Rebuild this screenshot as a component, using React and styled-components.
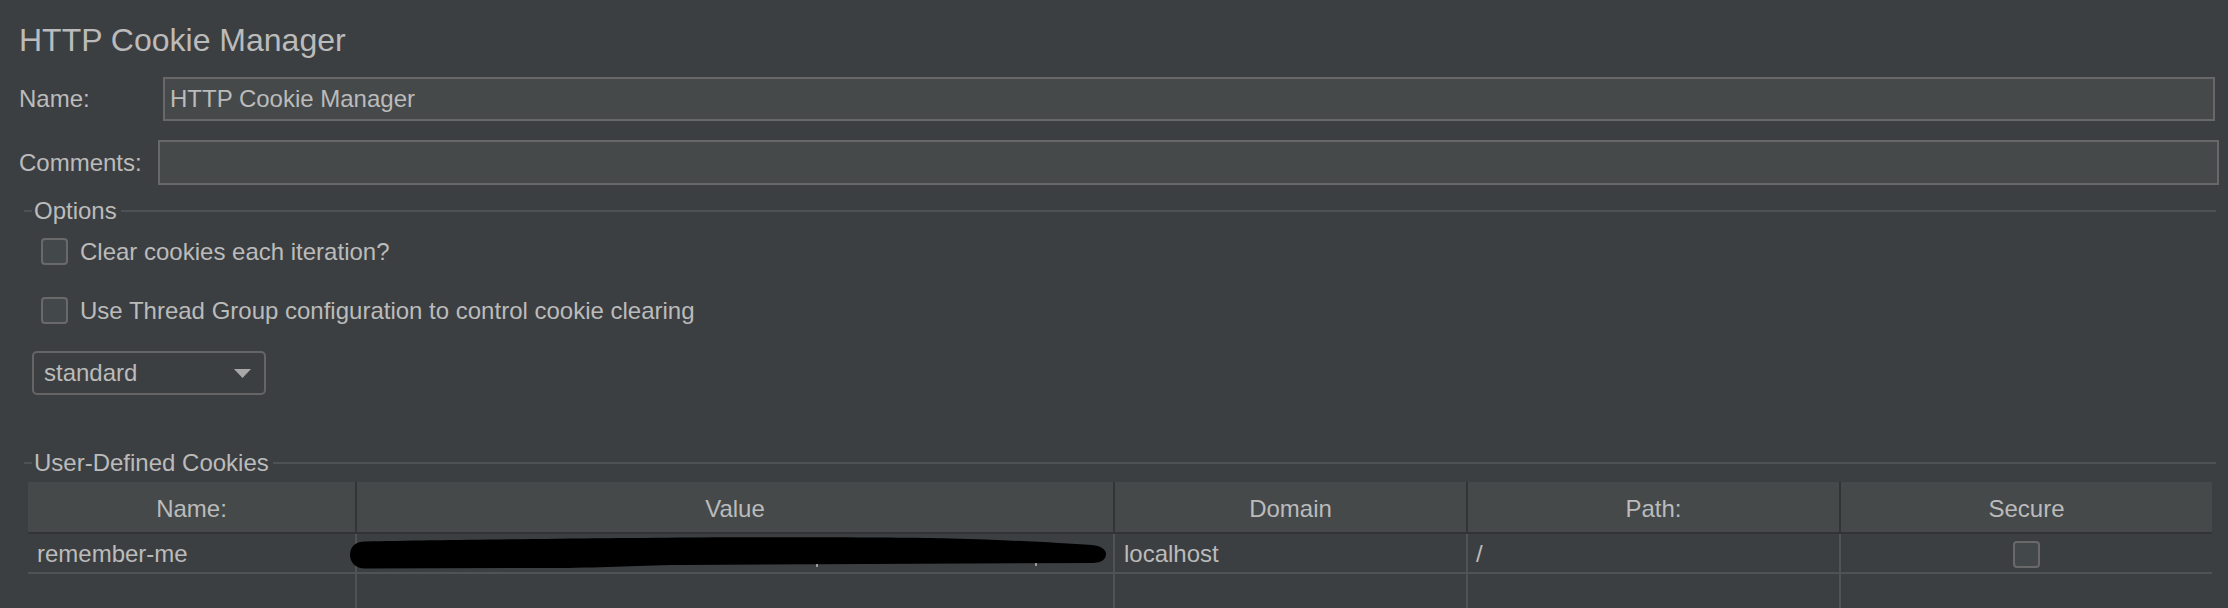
import React from 'react'
import styled, { createGlobalStyle } from 'styled-components'

const GlobalStyle = createGlobalStyle`
  html, body {
    margin: 0;
    padding: 0;
    background: #3c3f41;
  }
  body {
    font-family: "Liberation Sans", Arial, sans-serif;
    color: #bbbbbb;
    overflow: hidden;
  }
`

const Page = styled.div`
  width: 2228px;
  height: 608px;
  box-sizing: border-box;
  padding: 22px 9px 0 19px;
  background: #3c3f41;
  overflow: hidden;
`

const Title = styled.div`
  font-size: 32px;
  line-height: 36px;
  height: 36px;
  color: #bbbbbb;
`

const FieldRow = styled.div`
  display: flex;
  align-items: center;
  height: ${p => p.$h}px;
  margin-top: 19px;
  margin-right: ${p => p.$mr || 0}px;
`

const Label = styled.div`
  width: ${p => p.$w}px;
  flex-shrink: 0;
  font-size: 24px;
  color: #bbbbbb;
`

const TextField = styled.input`
  flex: 1;
  height: 100%;
  box-sizing: border-box;
  border: 2px solid #686868;
  background: #45494a;
  color: #bbbbbb;
  font-family: "Liberation Sans", Arial, sans-serif;
  font-size: 24px;
  padding: 0 5px;
  outline: none;
  margin: 0;
`

const Legend = styled.div`
  display: flex;
  align-items: center;
  height: 28px;
  margin: ${p => p.$mt}px 3px 0 5px;
`

const LegendLine = styled.div`
  height: 2px;
  background: #4f5254;
  width: ${p => (p.$grow ? 'auto' : '8px')};
  flex: ${p => (p.$grow ? 1 : 'none')};
`

const LegendText = styled.div`
  font-size: 24px;
  color: #bbbbbb;
  padding: 0 4px 0 2px;
  line-height: 28px;
`

const Options = styled.div`
  padding-left: 13px;
`

const CheckRow = styled.label`
  display: flex;
  align-items: center;
  gap: 12px;
  height: 27px;
  margin-top: ${p => p.$mt}px;
  padding-left: 9px;
  font-size: 24px;
  color: #bbbbbb;
`

const CheckBox = styled.span`
  display: inline-block;
  width: 27px;
  height: 27px;
  box-sizing: border-box;
  border: 2px solid #696969;
  border-radius: 4px;
  background: #43494a;
  flex-shrink: 0;
`

const Select = styled.div`
  display: flex;
  align-items: center;
  justify-content: space-between;
  width: 234px;
  height: 44px;
  box-sizing: border-box;
  margin-top: 27px;
  padding: 0 13px 0 10px;
  border: 2px solid #656565;
  border-radius: 5px;
  font-size: 24px;
  color: #bbbbbb;
`

const Table = styled.div`
  margin: 5px 7px 0 9px;
  display: grid;
  grid-template-columns: 327px 758px 353px 373px 373px;
`

const HeadCell = styled.div`
  height: 52px;
  box-sizing: border-box;
  background: #45494a;
  border-bottom: 2px solid #323435;
  border-left: ${p => (p.$first ? 'none' : '2px solid #323435')};
  display: flex;
  align-items: center;
  justify-content: center;
  padding-top: 4px;
  font-size: 24px;
  color: #bbbbbb;
`

const Cell = styled.div`
  position: relative;
  height: 40px;
  box-sizing: border-box;
  border-bottom: 2px solid #505354;
  border-left: ${p => (p.$first ? 'none' : '2px solid #505354')};
  display: flex;
  align-items: center;
  justify-content: ${p => (p.$center ? 'center' : 'flex-start')};
  padding: 2px 0 0 ${p => (p.$center ? 0 : p.$pl || 9)}px;
  font-size: 24px;
  color: #bbbbbb;
`

const Redaction = styled.svg`
  position: absolute;
  left: -7px;
  top: 3px;
`

const columns = ['Name:', 'Value', 'Domain', 'Path:', 'Secure']

function Arrow() {
  return (
    <svg width="17" height="9" viewBox="0 0 17 9">
      <polygon points="0,0 17,0 8.5,9" fill="#a8a8a8" />
    </svg>
  )
}

function Scribble() {
  return (
    <Redaction width="758" height="34" viewBox="0 0 758 34">
      <path
        d="M15,4.5 C100,3 250,1 350,0.5 C480,0 560,0.5 600,1.5 C660,3 710,6 742,8 C752,9 756,13 756,17 C756,22 752,26 742,26 L330,28 C280,28.5 250,31 200,31 L15,31.5 C5,31.5 0,25 0,18 C0,10 5,4.5 15,4.5 Z"
        fill="#000"
      />
      <rect x="466" y="27" width="2" height="3" fill="#9a9a9a" />
      <rect x="685" y="26" width="2" height="3" fill="#9a9a9a" />
    </Redaction>
  )
}

export default function App() {
  return (
    <>
      <GlobalStyle />
      <Page>
        <Title>HTTP Cookie Manager</Title>
        <FieldRow $h={44} $mr={4}>
          <Label $w={144}>Name:</Label>
          <TextField defaultValue="HTTP Cookie Manager" readOnly />
        </FieldRow>
        <FieldRow $h={45}>
          <Label $w={139}>Comments:</Label>
          <TextField defaultValue="" readOnly />
        </FieldRow>

        <Legend $mt={12}>
          <LegendLine />
          <LegendText>Options</LegendText>
          <LegendLine $grow />
        </Legend>
        <Options>
          <CheckRow $mt={13}>
            <CheckBox />
            Clear cookies each iteration?
          </CheckRow>
          <CheckRow $mt={32}>
            <CheckBox />
            Use Thread Group configuration to control cookie clearing
          </CheckRow>
          <Select>
            standard
            <Arrow />
          </Select>
        </Options>

        <Legend $mt={54}>
          <LegendLine />
          <LegendText>User-Defined Cookies</LegendText>
          <LegendLine $grow />
        </Legend>
        <Table>
          {columns.map((c, i) => (
            <HeadCell key={c} $first={i === 0}>{c}</HeadCell>
          ))}
          <Cell $first>remember-me</Cell>
          <Cell>
            <Scribble />
          </Cell>
          <Cell>localhost</Cell>
          <Cell $pl={8}>/</Cell>
          <Cell $center>
            <CheckBox />
          </Cell>
          <Cell $first />
          <Cell />
          <Cell />
          <Cell />
          <Cell />
        </Table>
      </Page>
    </>
  )
}
